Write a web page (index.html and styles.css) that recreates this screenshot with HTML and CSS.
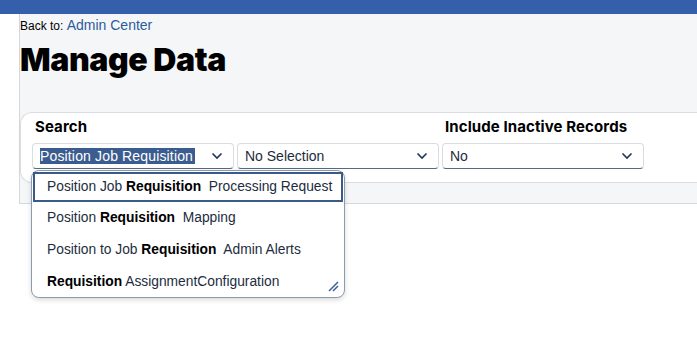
FILE: index.html
```html
<!DOCTYPE html>
<html lang="en">
<head>
  <meta charset="UTF-8" />
  <title>Manage Data</title>
  <link rel="stylesheet" href="styles.css">
</head>
<body>

  <div class="topbar"></div>

  <div class="page">
    <div class="back">Back to: <a href="#">Admin Center</a></div>
    <h1>Manage Data</h1>

    <!-- search card -->
    <div class="card">
      <div class="fields">
        <div class="label">Search</div>
        <div class="label"></div>
        <div class="label">Include Inactive Records</div>

        <div class="select">
          <span class="value"><span class="sel">Position Job Requisition Processing Request</span></span>
          <svg class="chev" width="12" height="8" viewBox="0 0 12 8"><path d="M1.5 1.5 L6 6 L10.5 1.5" fill="none" stroke="#1d3557" stroke-width="1.6"/></svg>
        </div>
        <div class="select">
          <span class="value">No Selection</span>
          <svg class="chev" width="12" height="8" viewBox="0 0 12 8"><path d="M1.5 1.5 L6 6 L10.5 1.5" fill="none" stroke="#1d3557" stroke-width="1.6"/></svg>
        </div>
        <div class="select">
          <span class="value">No</span>
          <svg class="chev" width="12" height="8" viewBox="0 0 12 8"><path d="M1.5 1.5 L6 6 L10.5 1.5" fill="none" stroke="#1d3557" stroke-width="1.6"/></svg>
        </div>
      </div>
    </div>
    <div class="band"></div>
  </div>

  <!-- suggestion list -->
  <ul class="suggest">
    <li class="focused">Position Job <b>Requisition</b>&nbsp; Processing Request</li>
    <li>Position <b>Requisition</b>&nbsp; Mapping</li>
    <li>Position to Job <b>Requisition</b>&nbsp; Admin Alerts</li>
    <li><b>Requisition</b> AssignmentConfiguration</li>
    <svg class="grip" width="12" height="12" viewBox="0 0 12 12"><path d="M2 11 L11 2 M6 11 L11 6" stroke="#3e5f99" stroke-width="1.5"/></svg>
  </ul>

</body>
</html>
```

FILE: styles.css
```css
body {
  margin: 0;
  font-family: 'Liberation Sans', Arial, sans-serif;
  background: #fff;
  color: #1d2d3e;
}

.topbar {
  height: 14px;
  background: #365fab;
}

.page {
  margin-left: 19px;
  border-left: 1px solid #d6d6d6;
  border-bottom: 1px solid #d5d9dc;
  background: #f5f6f7;
}

.back {
  font-size: 12px;
  color: #000;
  padding-top: 3px;
  height: 17px;
}

.back a {
  color: #2b5c9b;
  text-decoration: none;
  font-size: 14px;
}

h1 {
  margin: 0;
  padding-top: 6px;
  box-sizing: border-box;
  height: 78px;
  font-family: 'Inter', sans-serif;
  font-weight: 900;
  font-size: 32px;
  letter-spacing: -0.4px;
  color: #000;
}

.card {
  background: #fff;
  border: 1px solid #d9dde2;
  border-right: none;
  border-radius: 12px 0 0 12px;
  padding: 4px 0 0 11px;
  box-sizing: border-box;
  height: 71px;
}

.fields {
  display: grid;
  grid-template-columns: 202px 202px 202px;
  column-gap: 3px;
}

.label {
  font-family: 'Inter', sans-serif;
  font-weight: 700;
  font-size: 15px;
  letter-spacing: 0.1px;
  color: #000;
  padding-left: 3px;
  height: 26px;
  line-height: 20px;
}

.select {
  display: flex;
  align-items: center;
  height: 26px;
  box-sizing: border-box;
  border: 1px solid #d9dde2;
  border-bottom-color: #556b82;
  border-radius: 4px;
  padding: 0 10px 0 7px;
  font-size: 14px;
  color: #1d2d3e;
}

.value {
  overflow: hidden;
  white-space: nowrap;
  max-width: 155px;
}

.sel {
  background: #3b5c8f;
  color: #fff;
  letter-spacing: 0.15px;
}

.chev {
  margin-left: auto;
}

.band {
  height: 20px;
}

.suggest {
  position: absolute;
  left: 31px;
  top: 170px;
  width: 314px;
  height: 128px;
  box-sizing: border-box;
  margin: 0;
  padding: 1px;
  list-style: none;
  background: #fff;
  border: 1px solid #8a9bb0;
  border-radius: 8px;
  box-shadow: 0 2px 5px rgba(0, 0, 0, 0.15);
  font-size: 13.8px;
  color: #1d2d3e;
}

.suggest li {
  height: 32px;
  line-height: 32px;
  padding-left: 14px;
  white-space: nowrap;
}

.suggest li.focused {
  height: 30px;
  line-height: 26px;
  border: 2px solid #3b5a8a;
  padding-left: 12px;
  box-sizing: border-box;
}

.suggest b {
  font-weight: 700;
  color: #000;
}

.grip {
  position: absolute;
  right: 5px;
  bottom: 5px;
}
```
